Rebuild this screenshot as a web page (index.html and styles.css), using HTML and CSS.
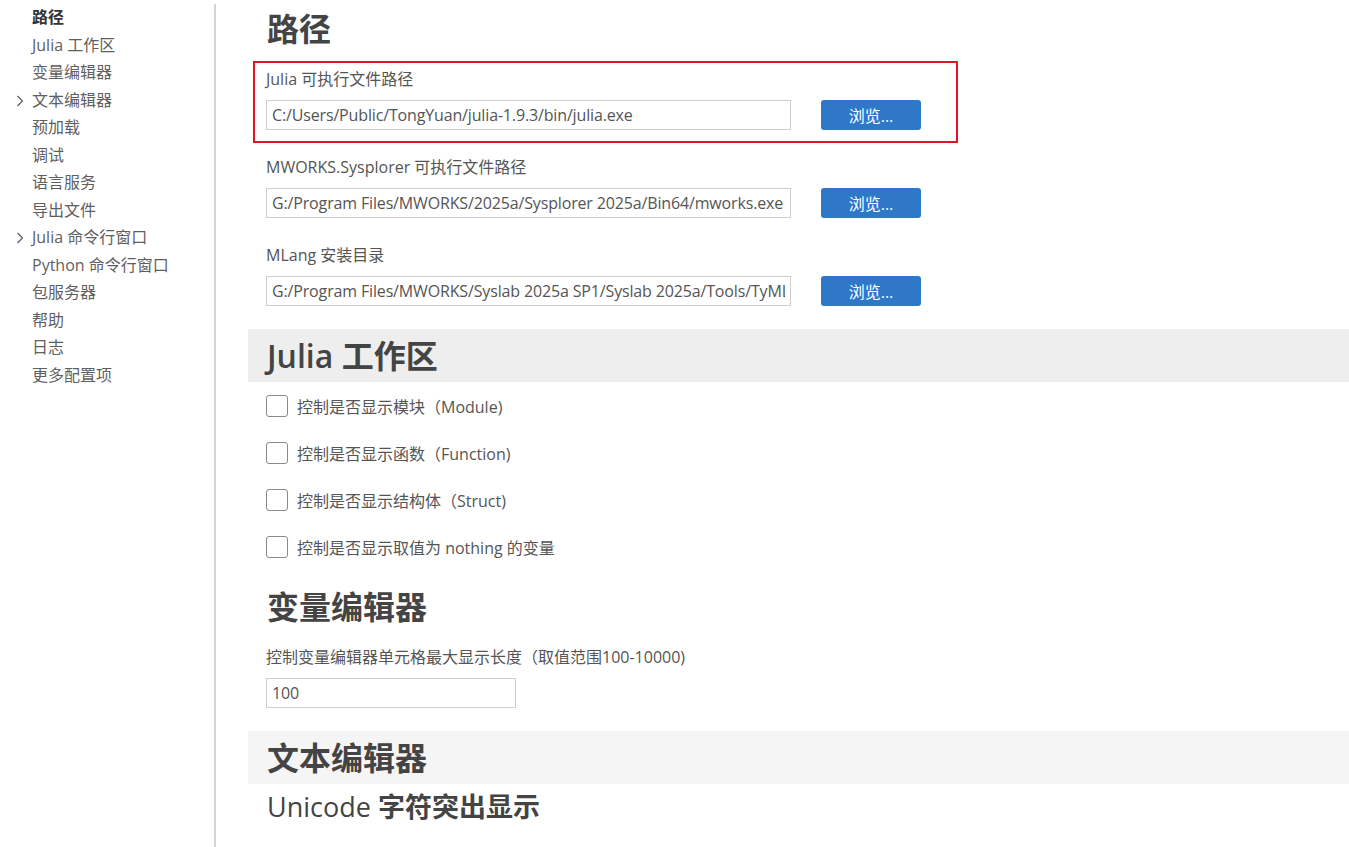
FILE: index.html
```html
<!DOCTYPE html>
<html>
<head>
    <title>设置</title>
    <link rel="stylesheet" href="styles.css">
</head>
<body>
    <div class="layout">
        <!-- 左侧目录 -->
        <nav class="toc">
            <a class="toc-item active" href="#">路径</a>
            <a class="toc-item" href="#">Julia 工作区</a>
            <a class="toc-item" href="#">变量编辑器</a>
            <a class="toc-item has-children" href="#">
                <svg class="chevron" width="8" height="12" viewBox="0 0 8 12"><polyline points="1.5,1 6.5,6 1.5,11" fill="none" stroke="#555" stroke-width="1.1"/></svg>文本编辑器</a>
            <a class="toc-item" href="#">预加载</a>
            <a class="toc-item" href="#">调试</a>
            <a class="toc-item" href="#">语言服务</a>
            <a class="toc-item" href="#">导出文件</a>
            <a class="toc-item has-children" href="#">
                <svg class="chevron" width="8" height="12" viewBox="0 0 8 12"><polyline points="1.5,1 6.5,6 1.5,11" fill="none" stroke="#555" stroke-width="1.1"/></svg>Julia 命令行窗口</a>
            <a class="toc-item" href="#">Python 命令行窗口</a>
            <a class="toc-item" href="#">包服务器</a>
            <a class="toc-item" href="#">帮助</a>
            <a class="toc-item" href="#">日志</a>
            <a class="toc-item" href="#">更多配置项</a>
        </nav>

        <main class="settings">
            <!-- 路径 -->
            <h2 class="section-title first">路径</h2>
            <div class="setting selected">
                <div class="setting-label">Julia 可执行文件路径</div>
                <div class="path-row">
                    <input class="text-input path-input" type="text" value="C:/Users/Public/TongYuan/julia-1.9.3/bin/julia.exe">
                    <button class="browse-btn">浏览...</button>
                </div>
            </div>
            <div class="setting">
                <div class="setting-label">MWORKS.Sysplorer 可执行文件路径</div>
                <div class="path-row">
                    <input class="text-input path-input" type="text" value="G:/Program Files/MWORKS/2025a/Sysplorer 2025a/Bin64/mworks.exe">
                    <button class="browse-btn">浏览...</button>
                </div>
            </div>
            <div class="setting">
                <div class="setting-label">MLang 安装目录</div>
                <div class="path-row">
                    <input class="text-input path-input" type="text" value="G:/Program Files/MWORKS/Syslab 2025a SP1/Syslab 2025a/Tools/TyMLang">
                    <button class="browse-btn">浏览...</button>
                </div>
            </div>

            <!-- Julia 工作区 -->
            <h2 class="section-title hover">Julia 工作区</h2>
            <label class="check-row"><span class="checkbox"></span>控制是否显示模块（Module)</label>
            <label class="check-row"><span class="checkbox"></span>控制是否显示函数（Function)</label>
            <label class="check-row"><span class="checkbox"></span>控制是否显示结构体（Struct)</label>
            <label class="check-row"><span class="checkbox"></span>控制是否显示取值为 nothing 的变量</label>

            <!-- 变量编辑器 -->
            <h2 class="section-title">变量编辑器</h2>
            <div class="setting">
                <div class="setting-label">控制变量编辑器单元格最大显示长度（取值范围100-10000)</div>
                <input class="text-input number-input" type="text" value="100">
            </div>

            <!-- 文本编辑器 -->
            <h2 class="section-title muted">文本编辑器</h2>
            <h3 class="sub-title"><span class="latin">Unicode</span> 字符突出显示</h3>
        </main>
    </div>
</body>
</html>
```

FILE: styles.css
```css
body {
    margin: 0;
    font-family: "Open Sans", "Noto Sans CJK SC", sans-serif;
    color: #555;
    background: #fff;
    overflow: hidden;
}

.layout {
    display: flex;
    height: 847px;
}

/* 左侧目录 */
.toc {
    width: 214px;
    flex-shrink: 0;
    margin-top: 4px;
    border-right: 2px solid #d4d4d4;
    display: flex;
    flex-direction: column;
}

.toc-item {
    position: relative;
    display: block;
    padding-left: 32px;
    line-height: 27.5px;
    font-size: 16px;
    color: #5f5f5f;
    text-decoration: none;
}

.toc-item.active {
    color: #333;
    font-weight: bold;
}

.toc-item .chevron {
    position: absolute;
    left: 16px;
    top: 8px;
}

/* 右侧设置 */
.settings {
    flex: 1;
    padding-left: 32px;
    padding-top: 2px;
}

.section-title {
    margin: 10px 0 0;
    height: 53px;
    line-height: 53px;
    padding-left: 19px;
    font-size: 32px;
    font-weight: 600;
    color: #444;
}

.section-title.first {
    margin-top: 0;
}

.section-title.hover {
    background: #eeeeee;
}

.section-title.muted {
    background: #f5f5f5;
}

.sub-title {
    margin: 6px 0 0;
    padding-left: 19px;
    font-size: 27px;
    line-height: 34px;
    font-weight: bold;
    color: #444;
}

.sub-title .latin {
    font-weight: normal;
}

.setting {
    width: 679px;
    margin: 6px 0 0 5px;
    padding: 6px 11px 11px;
    border: 2px solid transparent;
}

.setting.selected {
    border-color: #e81123;
}

.setting-label {
    font-size: 16px;
    line-height: 20px;
    margin-bottom: 11px;
    color: #555;
}

.path-row {
    display: flex;
    align-items: center;
    gap: 30px;
}

.text-input {
    box-sizing: border-box;
    height: 30px;
    padding: 0 5px;
    border: 1px solid #cecece;
    border-radius: 0;
    font-family: inherit;
    font-size: 16px;
    letter-spacing: -0.15px;
    color: #555;
    background: #fff;
    outline: none;
}

.path-input {
    width: 525px;
}

.number-input {
    width: 250px;
}

.browse-btn {
    width: 100px;
    height: 30px;
    border: none;
    border-radius: 3px;
    background: #2f78c8;
    color: #fff;
    font-family: inherit;
    font-size: 16px;
    cursor: pointer;
}

.check-row {
    display: flex;
    align-items: center;
    gap: 9px;
    height: 47px;
    padding-left: 18px;
    font-size: 16px;
    color: #555;
}

.checkbox {
    box-sizing: border-box;
    width: 22px;
    height: 22px;
    border: 1px solid #8a8a8a;
    border-radius: 3px;
    background: #fff;
}
```
